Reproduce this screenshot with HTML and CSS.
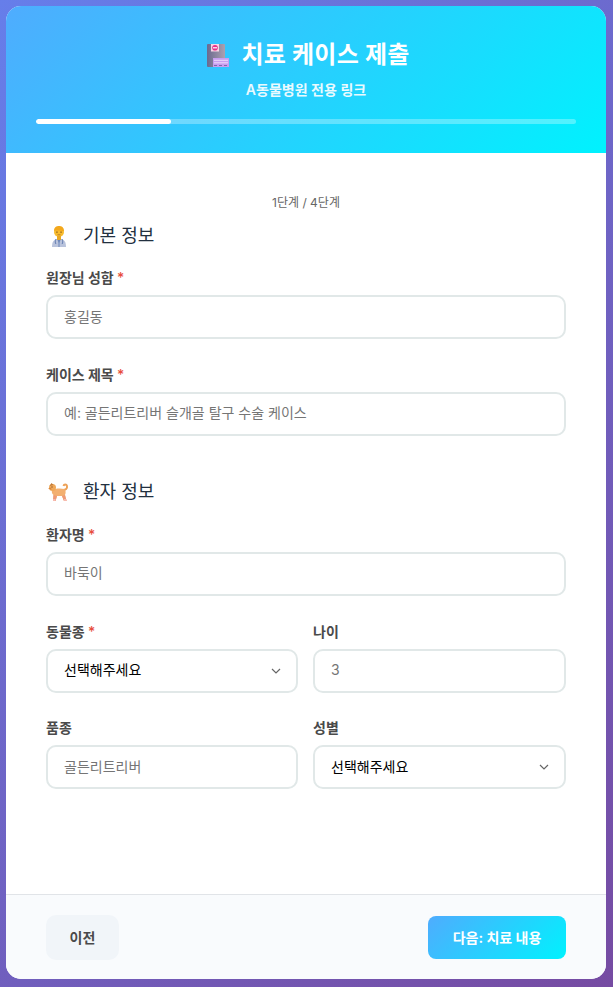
FILE: index.html
```html
<!DOCTYPE html>
<html lang="ko">
<head>
<meta charset="utf-8">
<title>치료 케이스 제출</title>
<link rel="stylesheet" href="styles.css">
</head>
<body>
<main class="card">
  <header class="header">
    <h1 class="title">
      <svg class="title-icon" viewBox="0 0 22 23" aria-hidden="true">
        <defs><linearGradient id="hosp" x1="0" y1="0" x2="1" y2="0"><stop offset="0" stop-color="#6a6a90"/><stop offset="1" stop-color="#aba0b0"/></linearGradient></defs>
        <rect x="0" y="0" width="18" height="23" rx="1" fill="url(#hosp)"/>
        <rect x="4" y="0" width="8" height="7.500" fill="#f6d6e6"/>
        <circle cx="8" cy="3.800" r="2.800" fill="#e8308a"/>
        <rect x="6" y="3.200" width="4" height="1.200" fill="#fff"/>
        <rect x="6" y="14" width="16" height="9" fill="#c79df0"/>
        <rect x="7" y="15.800" width="14" height="1" fill="#ecdcfb"/>
        <rect x="7" y="18.300" width="14" height="1" fill="#ecdcfb"/>
        <rect x="7" y="21" width="3" height="1" fill="#7d6aa8"/>
        <rect x="12" y="21" width="3" height="1" fill="#7d6aa8"/>
        <rect x="17" y="21" width="3" height="1" fill="#7d6aa8"/>
      </svg>
      <span>치료 케이스 제출</span>
    </h1>
    <p class="subtitle">A동물병원 전용 링크</p>
    <div class="progress"><div class="progress-fill"></div></div>
  </header>

  <form class="body">
    <p class="step">1단계 / 4단계</p>

    <h2 class="section-title">
      <svg class="section-icon" viewBox="0 0 18 21" aria-hidden="true">
        <path d="M2 21c0-5 1.500-7 4.500-8h5c3 1 4.500 3 4.500 8z" fill="#b9c3dc"/>
        <path d="M7 13l2 4 2-4z" fill="#6d86b8"/>
        <path d="M6 13c-1 2-1 4 0 5M12 13c1 2 1 4 0 5" stroke="#4d6aa5" stroke-width="0.800" fill="none"/>
        <rect x="8.500" y="15" width="1" height="6" fill="#6d86b8"/>
        <circle cx="9" cy="6" r="5" fill="#f7bb2e"/>
        <rect x="7" y="10" width="4" height="4" fill="#e9a823"/>
        <path d="M4 5c0-4 2.500-5 5-5s5 1 5 5c-3 0-7-1-10 0z" fill="#f3a81c"/>
        <rect x="6.300" y="5.500" width="1.300" height="1.300" fill="#8a5a1a"/>
        <rect x="10.400" y="5.500" width="1.300" height="1.300" fill="#8a5a1a"/>
        <rect x="7.500" y="8.500" width="3" height="0.700" fill="#a86a1e"/>
      </svg>
      <span>기본 정보</span>
    </h2>
    <div class="field">
      <label class="label" for="director">원장님 성함 <em class="req">*</em></label>
      <input class="control" id="director" type="text" placeholder="홍길동">
    </div>
    <div class="field">
      <label class="label" for="case-title">케이스 제목 <em class="req">*</em></label>
      <input class="control" id="case-title" type="text" placeholder="예: 골든리트리버 슬개골 탈구 수술 케이스">
    </div>

    <h2 class="section-title section-second">
      <svg class="section-icon dog-icon" viewBox="0 0 21 18" aria-hidden="true">
        <path d="M15 7c2.500 0 4.500-1.500 4-4C18.500 1 16 1 15.500 3" stroke="#eda258" stroke-width="2" fill="none"/>
        <path d="M4 7c2-1.500 9-2 12-1 2 1 2 4 1 6l1.500 6H16l-2-5H9l-1.500 5H5l.5-6C4 11 3.500 9 4 7z" fill="#f3b070"/>
        <path d="M5.500 12L5 18h2.500L9 13zM14 13l2 5h2.500L17 12z" fill="#ee9a78"/>
        <rect x="5" y="16" width="2.500" height="2" fill="#f7b9b0"/>
        <rect x="16" y="16" width="2.500" height="2" fill="#f7b9b0"/>
        <circle cx="4.500" cy="4.500" r="3.500" fill="#f0a95a"/>
        <path d="M1.500 3l2-3 2 2z" fill="#c17a36"/>
        <path d="M0 5.500l3-1 .5 2.500z" fill="#d8863c"/>
        <rect x="3.500" y="3.500" width="1" height="1" fill="#5b3214"/>
      </svg>
      <span>환자 정보</span>
    </h2>
    <div class="field field-after-second">
      <label class="label" for="patient">환자명 <em class="req">*</em></label>
      <input class="control" id="patient" type="text" placeholder="바둑이">
    </div>
    <div class="row">
      <div class="field">
        <label class="label" for="species">동물종 <em class="req">*</em></label>
        <select class="control select" id="species"><option>선택해주세요</option></select>
      </div>
      <div class="field">
        <label class="label" for="age">나이</label>
        <input class="control" id="age" type="text" placeholder="3">
      </div>
    </div>
    <div class="row">
      <div class="field">
        <label class="label" for="breed">품종</label>
        <input class="control" id="breed" type="text" placeholder="골든리트리버">
      </div>
      <div class="field">
        <label class="label" for="sex">성별</label>
        <select class="control select" id="sex"><option>선택해주세요</option></select>
      </div>
    </div>
  </form>

  <footer class="footer">
    <button class="btn btn-prev" type="button">이전</button>
    <button class="btn btn-next" type="button">다음: 치료 내용</button>
  </footer>
</main>
</body>
</html>
```

FILE: styles.css
```css
* { box-sizing: border-box; }
html, body { height: 100%; }
body {
  margin: 0;
  padding: 6px 6px 8px;
  background: linear-gradient(135deg, #667eea 0%, #764ba2 100%);
  font-family: Inter, "Noto Sans CJK KR", sans-serif;
  overflow: hidden;
}
.card {
  width: 600px;
  height: 973px;
  display: flex;
  flex-direction: column;
  background: #fff;
  border-radius: 15px;
  overflow: hidden;
}
.header {
  height: 147px;
  flex: none;
  padding: 30px 30px 0;
  background: linear-gradient(135deg, #4facfe 0%, #00f2fe 100%);
  color: #fff;
  text-align: center;
}
.title {
  margin: 0;
  height: 38px;
  display: flex;
  align-items: center;
  justify-content: center;
  gap: 12px;
  padding-left: 5px;
  font-size: 24px;
  font-weight: 700;
  line-height: 38px;
  letter-spacing: 0.250px;
}
.title-icon { width: 22px; height: 23px; flex: none; }
.subtitle {
  margin: 6px 0 0;
  font-size: 14px;
  font-weight: 600;
  line-height: 20px;
  opacity: 0.9;
}
.progress {
  margin-top: 19px;
  height: 5px;
  background: rgba(255, 255, 255, 0.3);
  border-radius: 3px;
  overflow: hidden;
}
.progress-fill { width: 25%; height: 100%; background: #fff; border-radius: 3px; }
.body {
  flex: 1;
  padding: 41px 40px 0;
}
.step {
  margin: 0;
  height: 18px;
  font-size: 12px;
  line-height: 18px;
  color: #666;
  text-align: center;
}
.section-title {
  margin: 9px 0 0;
  height: 30px;
  display: flex;
  align-items: center;
  gap: 15px;
  padding-left: 4px;
  font-size: 18px;
  font-weight: 400;
  line-height: 30px;
  color: #22303f;
}
.section-second { margin-top: 41px; }
.section-icon { width: 18px; height: 21px; flex: none; }
.dog-icon { width: 21px; height: 18px; margin: 0 -1px 0 -2px; }
.field { margin-top: 18px; flex: 1; min-width: 0; }
.field + .field { margin-top: 26.800px; }
.field-after-second { margin-top: 19px; }
.label {
  display: block;
  height: 18px;
  margin-bottom: 8px;
  font-size: 14px;
  font-weight: 700;
  line-height: 18px;
  color: #4a4a4a;
}
.req { font-style: normal; color: #e74c3c; font-weight: 500; }
.control {
  display: block;
  width: 100%;
  height: 44px;
  padding: 0 16px 2px;
  border: 2px solid #e1e8e8;
  border-radius: 10px;
  background: #fff;
  font-family: inherit;
  font-size: 14px;
  outline: none;
}
.control::placeholder { color: #757575; opacity: 1; }
.select {
  appearance: none;
  color: #000;
  font-weight: 400;
  background-image: url("data:image/svg+xml,%3Csvg xmlns='http://www.w3.org/2000/svg' width='10' height='6' viewBox='0 0 10 6'%3E%3Cpath d='M1 1l4 4 4-4' fill='none' stroke='%23666' stroke-width='1.200'/%3E%3C/svg%3E");
  background-repeat: no-repeat;
  background-position: right 15px center;
}
.row { display: grid; grid-template-columns: 252px 253px; gap: 15px; margin-top: 26.800px; }
.row .field { margin-top: 0; }
.row .field + .field { margin-top: 0; }
.footer {
  flex: none;
  height: 85px;
  display: flex;
  align-items: center;
  justify-content: space-between;
  padding: 0 40px;
  background: #f9fbfd;
  border-top: 1px solid #e1e4e8;
}
.btn {
  border: 0;
  font-family: inherit;
  font-size: 14px;
  font-weight: 700;
}
.btn-prev { width: 73px; height: 45px; border-radius: 10px; background: #f1f5f9; color: #4a4a4a; }
.btn-next { width: 138px; height: 43px; border-radius: 8px; background: linear-gradient(135deg, #4facfe 0%, #00f2fe 100%); color: #fff; }
```
